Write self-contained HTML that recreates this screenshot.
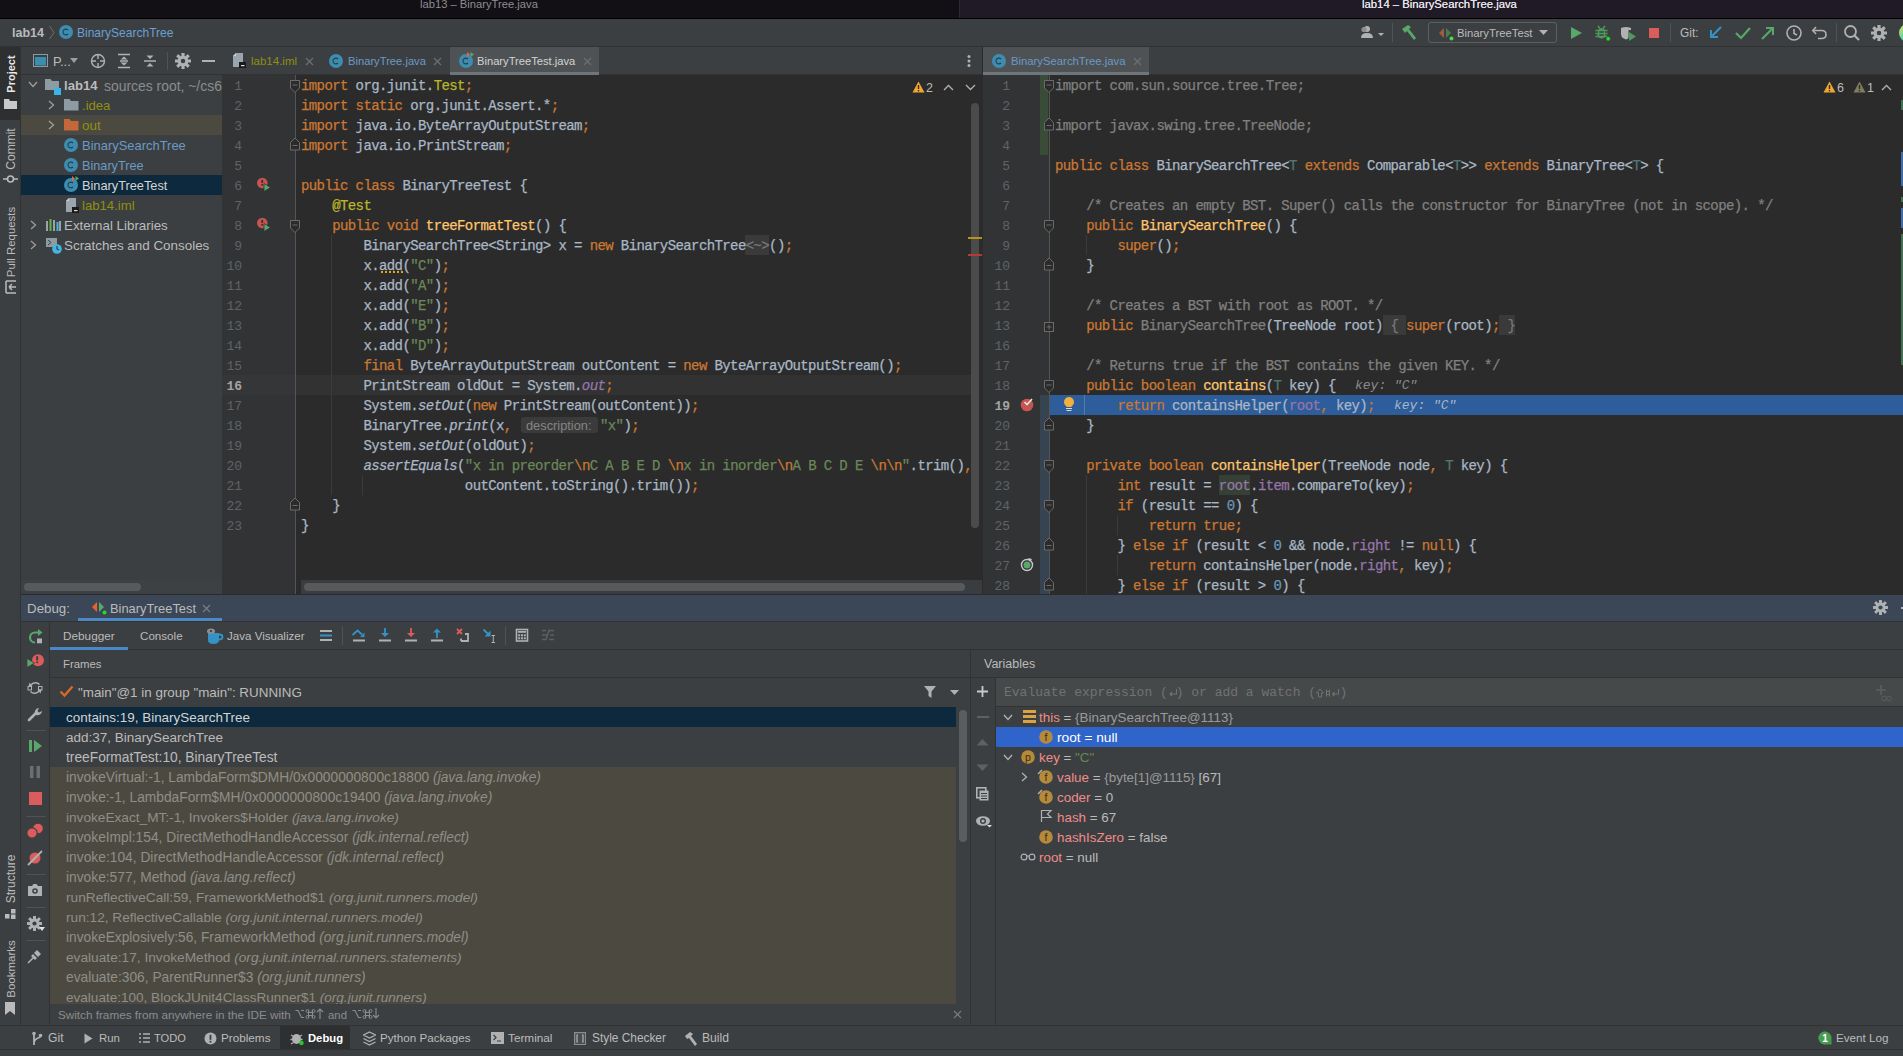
<!DOCTYPE html><html><head><meta charset="utf-8"><style>
*{margin:0;padding:0;box-sizing:border-box}
html,body{width:1903px;height:1056px;overflow:hidden;background:#3C3F41}
body{position:relative;font-family:"Liberation Sans",sans-serif}
body>div{position:absolute}
.t{white-space:pre}
.code{font-family:"Liberation Mono",monospace;font-size:14px;letter-spacing:-0.6px;line-height:20px;height:20px;padding-top:1px;white-space:pre;color:#A9B7C6;-webkit-text-stroke:0.25px currentColor}
.ln{font-family:"Liberation Mono",monospace;font-size:13px;line-height:20px;height:20px;padding-top:2px;width:40px;text-align:right;white-space:pre}
</style></head><body><div style="left:0px;top:0px;width:959px;height:18px;background:#121015;"></div>
<div style="left:959px;top:0px;width:1px;height:18px;background:#2E2936;"></div>
<div style="left:960px;top:0px;width:943px;height:18px;background:#1F1A25;"></div>
<div style="left:0px;top:18px;width:1903px;height:1px;background:#000000;"></div>
<div class="t" style="left:420px;top:-4px;height:16px;line-height:16px;color:#8E8C92;font-size:11.21px;">lab13 – BinaryTree.java</div>
<div class="t" style="left:1362px;top:-4px;height:16px;line-height:16px;color:#E6E4EA;font-size:11.32px;text-shadow:0 0 0.4px #E6E4EA;">lab14 – BinarySearchTree.java</div>
<div style="left:0px;top:19px;width:1903px;height:28px;background:#3C3F41;"></div>
<div style="left:0px;top:46px;width:1903px;height:1px;background:#323232;"></div>
<div class="t" style="left:12px;top:23px;height:20px;line-height:20px;color:#BBBBBB;font-size:12.52px;font-weight:bold;">lab14</div>
<svg style="position:absolute;left:48px;top:25px;" width="8" height="15" viewBox="0 0 8 15"><path d="M1.5 1 L6 7.5 L1.5 14" stroke="#6E6E6E" stroke-width="1" fill="none"/></svg>
<svg style="position:absolute;left:59px;top:25px;" width="14" height="14" viewBox="0 0 14 14"><circle cx="7" cy="7" r="7" fill="#3E8DB0"/><path d="M9 5 A2.9 2.9 0 1 0 9 9" stroke="#22404D" stroke-width="1.1" fill="none"/></svg>
<div class="t" style="left:77px;top:23px;height:20px;line-height:20px;color:#6A9FD0;font-size:12.02px;">BinarySearchTree</div>
<svg style="position:absolute;left:1358px;top:25px;" width="28" height="16" viewBox="0 0 28 16"><circle cx="9" cy="4" r="3" fill="#AFB1B3"/><path d="M3 13 Q3 8 9 8 Q15 8 15 13Z" fill="#AFB1B3"/><circle cx="6" cy="4.5" r="2.6" fill="#8C8E90"/><path d="M20 8 L26 8 L23 11Z" fill="#AFB1B3"/></svg>
<div style="left:1392px;top:23px;width:1px;height:19px;background:#505356;"></div>
<svg style="position:absolute;left:1400px;top:24px;" width="18" height="18" viewBox="0 0 18 18"><path d="M2 5 L8 1 L11 3 L9 5 L16 14 L14 16 L7 7 L5 9Z" fill="#59A869"/></svg>
<div style="left:1428px;top:22px;width:129px;height:21px;background:transparent;border:1px solid #5E6060;border-radius:3px;box-sizing:border-box;"></div>
<svg style="position:absolute;left:1438px;top:26px;" width="18" height="16" viewBox="0 0 18 16"><path d="M6 2 L1 7 L6 12Z" fill="#9B5E3F"/><path d="M8 2 L13 7 L8 12Z" fill="#4C7A55"/><circle cx="13.5" cy="12.5" r="2" fill="#3FE03F"/></svg>
<div class="t" style="left:1457px;top:23px;height:20px;line-height:20px;color:#BBBBBB;font-size:11.29px;">BinaryTreeTest</div>
<svg style="position:absolute;left:1539px;top:29px;" width="10" height="8" viewBox="0 0 10 8"><path d="M0 1 L9 1 L4.5 6Z" fill="#AFB1B3"/></svg>
<svg style="position:absolute;left:1568px;top:25px;" width="16" height="16" viewBox="0 0 16 16"><path d="M3 2 L14 8 L3 14Z" fill="#59A869"/></svg>
<svg style="position:absolute;left:1595px;top:25px;" width="18" height="18" viewBox="0 0 18 18"><path d="M3 1 L5 3.5 M10 1 L8 3.5" stroke="#4E9A5E" stroke-width="1.5"/><path d="M3.5 4.5 Q6.5 1.5 9.5 4.5 L10.5 11 Q6.5 16 2.5 11Z" fill="#4E9A5E"/><path d="M0.5 5.5 L12.5 5.5 M0.5 8.5 L12.5 8.5 M0.5 11.5 L12.5 11.5" stroke="#4E9A5E" stroke-width="1.6"/><rect x="4.3" y="6.3" width="4.4" height="1.4" fill="#3C3F41"/><rect x="4.3" y="9.3" width="4.4" height="1.4" fill="#3C3F41"/><circle cx="13.2" cy="13.8" r="2.2" fill="#22E022" stroke="#3C3F41" stroke-width="0.6"/></svg>
<svg style="position:absolute;left:1620px;top:26px;" width="18" height="17" viewBox="0 0 18 17"><path d="M1 2 Q6 0 11 2 L11 4 L8.5 4 L8.5 11 Q8.5 13 6 13.5 Q1 12 1 8Z" fill="#AFB1B3"/><path d="M9 6 L16 10.5 L9 15Z" fill="#4E9A5E"/></svg>
<div style="left:1649px;top:28px;width:10px;height:10px;background:#DB5C5C;"></div>
<div style="left:1670px;top:23px;width:1px;height:19px;background:#505356;"></div>
<div class="t" style="left:1680px;top:23px;height:20px;line-height:20px;color:#BBBBBB;font-size:11.89px;">Git:</div>
<svg style="position:absolute;left:1707px;top:24px;" width="18" height="18" viewBox="0 0 18 18"><path d="M14 3 L4 13 M4 6 L4 13 L11 13" stroke="#3592C4" stroke-width="2" fill="none"/></svg>
<svg style="position:absolute;left:1734px;top:24px;" width="18" height="18" viewBox="0 0 18 18"><path d="M2 9 L7 14 L16 4" stroke="#59A869" stroke-width="2.2" fill="none"/></svg>
<svg style="position:absolute;left:1759px;top:24px;" width="18" height="18" viewBox="0 0 18 18"><path d="M3 15 L14 4 M7 4 L14 4 L14 11" stroke="#59A869" stroke-width="2" fill="none"/></svg>
<svg style="position:absolute;left:1785px;top:24px;" width="18" height="18" viewBox="0 0 18 18"><circle cx="9" cy="9" r="7" stroke="#AFB1B3" stroke-width="1.6" fill="none"/><path d="M9 5 L9 9.5 L12 11" stroke="#AFB1B3" stroke-width="1.6" fill="none"/></svg>
<svg style="position:absolute;left:1811px;top:24px;" width="18" height="18" viewBox="0 0 18 18"><path d="M5 3 L1.8 6.5 L5 10" stroke="#AFB1B3" stroke-width="1.6" fill="none"/><path d="M2 6.5 L10.5 6.5 Q15 6.5 15 10.5 Q15 14.5 10.5 14.5 L7 14.5" stroke="#AFB1B3" stroke-width="1.6" fill="none"/></svg>
<div style="left:1836px;top:23px;width:1px;height:19px;background:#505356;"></div>
<svg style="position:absolute;left:1843px;top:24px;" width="18" height="18" viewBox="0 0 18 18"><circle cx="7.5" cy="7.5" r="5.5" stroke="#AFB1B3" stroke-width="1.8" fill="none"/><path d="M11.5 11.5 L16 16" stroke="#AFB1B3" stroke-width="2.2"/></svg>
<svg style="position:absolute;left:1871px;top:25px;" width="16" height="16" viewBox="0 0 16 16"><rect x="6.40" y="-0.20" width="3.20" height="4.52" rx="0.6" fill="#AFB1B3" transform="rotate(0 8.0 8.0)"/><rect x="6.40" y="-0.20" width="3.20" height="4.52" rx="0.6" fill="#AFB1B3" transform="rotate(45 8.0 8.0)"/><rect x="6.40" y="-0.20" width="3.20" height="4.52" rx="0.6" fill="#AFB1B3" transform="rotate(90 8.0 8.0)"/><rect x="6.40" y="-0.20" width="3.20" height="4.52" rx="0.6" fill="#AFB1B3" transform="rotate(135 8.0 8.0)"/><rect x="6.40" y="-0.20" width="3.20" height="4.52" rx="0.6" fill="#AFB1B3" transform="rotate(180 8.0 8.0)"/><rect x="6.40" y="-0.20" width="3.20" height="4.52" rx="0.6" fill="#AFB1B3" transform="rotate(225 8.0 8.0)"/><rect x="6.40" y="-0.20" width="3.20" height="4.52" rx="0.6" fill="#AFB1B3" transform="rotate(270 8.0 8.0)"/><rect x="6.40" y="-0.20" width="3.20" height="4.52" rx="0.6" fill="#AFB1B3" transform="rotate(315 8.0 8.0)"/><circle cx="8.0" cy="8.0" r="5.28" fill="#AFB1B3"/><circle cx="8.0" cy="8.0" r="2.24" fill="#3C3F41"/></svg>
<svg style="position:absolute;left:1898px;top:24px;" width="10" height="18" viewBox="0 0 10 18"><defs><linearGradient id="cg" x1="0" y1="0" x2="1" y2="1"><stop offset="0" stop-color="#F5E05A"/><stop offset="0.5" stop-color="#5AD2A0"/><stop offset="1" stop-color="#3E8EF7"/></linearGradient></defs><ellipse cx="9" cy="9" rx="8" ry="8.5" fill="url(#cg)"/></svg>
<div style="left:0px;top:47px;width:20px;height:979px;background:#3C3F41;"></div>
<div style="left:20px;top:47px;width:1px;height:979px;background:#323232;"></div>
<div style="left:0px;top:47px;width:20px;height:73px;background:#2D2F30;"></div>
<div class="t" style="left:-49.5px;top:64.0px;width:120px;height:20px;line-height:20px;text-align:center;color:#E8E8E8;font-size:11px;transform:rotate(-90deg);font-weight:bold;">Project</div>
<svg style="position:absolute;left:4px;top:99px;" width="13" height="10" viewBox="0 0 13 10"><path d="M0 0 L5 0 L6 2 L13 2 L13 10 L0 10Z" fill="#C9C9C9"/></svg>
<div class="t" style="left:-49.5px;top:139.0px;width:120px;height:20px;line-height:20px;text-align:center;color:#BBBBBB;font-size:12px;transform:rotate(-90deg);">Commit</div>
<svg style="position:absolute;left:3px;top:173px;" width="15" height="12" viewBox="0 0 15 12"><circle cx="7.5" cy="6" r="3" stroke="#BBBBBB" stroke-width="1.6" fill="none"/><path d="M0 6 L4 6 M11 6 L15 6" stroke="#BBBBBB" stroke-width="1.6"/></svg>
<div class="t" style="left:-49.5px;top:231.5px;width:120px;height:20px;line-height:20px;text-align:center;color:#BBBBBB;font-size:11.4px;transform:rotate(-90deg);">Pull Requests</div>
<svg style="position:absolute;left:5px;top:280px;" width="12" height="14" viewBox="0 0 12 14"><path d="M1 1 L1 13 M1 1 L11 1 M1 13 L11 13 M4 7 L11 7 M4 7 L7 4 M4 7 L7 10" stroke="#BBBBBB" stroke-width="1.5" fill="none"/></svg>
<div class="t" style="left:-49.5px;top:869.0px;width:120px;height:20px;line-height:20px;text-align:center;color:#BBBBBB;font-size:12px;transform:rotate(-90deg);">Structure</div>
<svg style="position:absolute;left:5px;top:909px;" width="11" height="10" viewBox="0 0 11 10"><rect x="0" y="5" width="4.5" height="4.5" fill="#BBBBBB"/><rect x="6" y="0" width="4.5" height="4.5" fill="#BBBBBB"/><rect x="6" y="5.5" width="4.5" height="4.5" fill="#BBBBBB"/></svg>
<div class="t" style="left:-49.5px;top:959.0px;width:120px;height:20px;line-height:20px;text-align:center;color:#BBBBBB;font-size:11.5px;transform:rotate(-90deg);">Bookmarks</div>
<svg style="position:absolute;left:5px;top:1002px;" width="10" height="13" viewBox="0 0 10 13"><path d="M0 0 L10 0 L10 13 L5 9 L0 13Z" fill="#BBBBBB"/></svg>
<div style="left:21px;top:47px;width:201px;height:548px;background:#3C3F41;"></div>
<div style="left:21px;top:74px;width:201px;height:1px;background:#323232;"></div>
<svg style="position:absolute;left:33px;top:54px;" width="16" height="14" viewBox="0 0 16 14"><rect x="0.5" y="0.5" width="14" height="12" fill="none" stroke="#8C9AA3"/><rect x="2" y="3" width="11" height="8.5" fill="#3B8EB0"/></svg>
<div class="t" style="left:53px;top:52px;height:20px;line-height:20px;color:#BBBBBB;font-size:13px;">P...</div>
<svg style="position:absolute;left:70px;top:58px;" width="9" height="6" viewBox="0 0 9 6"><path d="M0 0 L8 0 L4 5Z" fill="#9E9E9E"/></svg>
<svg style="position:absolute;left:90px;top:53px;" width="16" height="16" viewBox="0 0 16 16"><circle cx="8" cy="8" r="6.5" stroke="#AFB1B3" stroke-width="1.4" fill="none"/><path d="M8 1 L8 6 M8 10 L8 15 M1 8 L6 8 M10 8 L15 8" stroke="#AFB1B3" stroke-width="1.4"/></svg>
<svg style="position:absolute;left:117px;top:53px;" width="14" height="16" viewBox="0 0 14 16"><path d="M1 1.5 L13 1.5 M1 14.5 L13 14.5 M3 8 L11 8" stroke="#AFB1B3" stroke-width="1.5"/><path d="M3.5 6.5 L7 3.5 L10.5 6.5Z M3.5 9.5 L7 12.5 L10.5 9.5Z" fill="#AFB1B3"/></svg>
<svg style="position:absolute;left:143px;top:53px;" width="14" height="16" viewBox="0 0 14 16"><path d="M1 8 L13 8" stroke="#AFB1B3" stroke-width="1.5"/><path d="M3.5 2.5 L10.5 2.5 L7 6Z M3.5 13.5 L10.5 13.5 L7 10Z" fill="#AFB1B3"/></svg>
<div style="left:167px;top:52px;width:1px;height:18px;background:#505356;"></div>
<svg style="position:absolute;left:175px;top:53px;" width="16" height="16" viewBox="0 0 16 16"><rect x="6.40" y="-0.20" width="3.20" height="4.52" rx="0.6" fill="#AFB1B3" transform="rotate(0 8.0 8.0)"/><rect x="6.40" y="-0.20" width="3.20" height="4.52" rx="0.6" fill="#AFB1B3" transform="rotate(45 8.0 8.0)"/><rect x="6.40" y="-0.20" width="3.20" height="4.52" rx="0.6" fill="#AFB1B3" transform="rotate(90 8.0 8.0)"/><rect x="6.40" y="-0.20" width="3.20" height="4.52" rx="0.6" fill="#AFB1B3" transform="rotate(135 8.0 8.0)"/><rect x="6.40" y="-0.20" width="3.20" height="4.52" rx="0.6" fill="#AFB1B3" transform="rotate(180 8.0 8.0)"/><rect x="6.40" y="-0.20" width="3.20" height="4.52" rx="0.6" fill="#AFB1B3" transform="rotate(225 8.0 8.0)"/><rect x="6.40" y="-0.20" width="3.20" height="4.52" rx="0.6" fill="#AFB1B3" transform="rotate(270 8.0 8.0)"/><rect x="6.40" y="-0.20" width="3.20" height="4.52" rx="0.6" fill="#AFB1B3" transform="rotate(315 8.0 8.0)"/><circle cx="8.0" cy="8.0" r="5.28" fill="#AFB1B3"/><circle cx="8.0" cy="8.0" r="2.24" fill="#3C3F41"/></svg>
<div style="left:202px;top:60px;width:13px;height:2px;background:#AFB1B3;"></div>
<div style="left:21px;top:115px;width:201px;height:20px;background:#4C4A40;"></div>
<div style="left:21px;top:175px;width:201px;height:20px;background:#0D293E;"></div>
<svg style="position:absolute;left:28px;top:81px;" width="10" height="7" viewBox="0 0 10 7"><path d="M1 1 L5 5.5 L9 1" stroke="#9E9E9E" stroke-width="1.3" fill="none"/></svg>
<svg style="position:absolute;left:45px;top:79px;" width="17" height="16" viewBox="0 0 17 16"><path d="M0 0 L5.5 0 L7 2 L14 2 L14 11 L0 11Z" fill="#8D9BA3"/><rect x="9" y="9" width="7" height="7" fill="#3BB4E8"/></svg>
<div class="t" style="left:64px;top:76px;height:20px;line-height:20px;color:#BBBBBB;font-size:13.1px;font-weight:bold;">lab14</div>
<div class="t" style="left:104px;top:76px;height:20px;line-height:20px;color:#8C8C8C;font-size:13.92px;">sources root, ~/cs6</div>
<svg style="position:absolute;left:48px;top:100px;" width="7" height="10" viewBox="0 0 7 10"><path d="M1 1 L5.5 5 L1 9" stroke="#9E9E9E" stroke-width="1.3" fill="none"/></svg>
<svg style="position:absolute;left:64px;top:99px;" width="15" height="12" viewBox="0 0 15 12"><path d="M0 0 L5.5 0 L7 2 L14.5 2 L14.5 11.5 L0 11.5Z" fill="#8D9BA3"/></svg>
<div class="t" style="left:82px;top:96px;height:20px;line-height:20px;color:#8F9010;font-size:13.1px;">.idea</div>
<svg style="position:absolute;left:48px;top:120px;" width="7" height="10" viewBox="0 0 7 10"><path d="M1 1 L5.5 5 L1 9" stroke="#9E9E9E" stroke-width="1.3" fill="none"/></svg>
<svg style="position:absolute;left:64px;top:119px;" width="15" height="12" viewBox="0 0 15 12"><path d="M0 0 L5.5 0 L7 2 L14.5 2 L14.5 11.5 L0 11.5Z" fill="#C4683A"/></svg>
<div class="t" style="left:82px;top:116px;height:20px;line-height:20px;color:#8F9010;font-size:13.45px;">out</div>
<svg style="position:absolute;left:64px;top:138px;" width="14" height="14" viewBox="0 0 14 14"><circle cx="7" cy="7" r="7" fill="#3E8DB0"/><path d="M9 5 A2.9 2.9 0 1 0 9 9" stroke="#22404D" stroke-width="1.1" fill="none"/></svg>
<div class="t" style="left:82px;top:136px;height:20px;line-height:20px;color:#6A9AC6;font-size:12.94px;">BinarySearchTree</div>
<svg style="position:absolute;left:64px;top:158px;" width="14" height="14" viewBox="0 0 14 14"><circle cx="7" cy="7" r="7" fill="#3E8DB0"/><path d="M9 5 A2.9 2.9 0 1 0 9 9" stroke="#22404D" stroke-width="1.1" fill="none"/></svg>
<div class="t" style="left:82px;top:156px;height:20px;line-height:20px;color:#6A9AC6;font-size:12.69px;">BinaryTree</div>
<svg style="position:absolute;left:64px;top:178px;" width="14" height="14" viewBox="0 0 14 14"><circle cx="7" cy="7" r="7" fill="#3E8DB0"/><path d="M9 5 A2.9 2.9 0 1 0 9 9" stroke="#22404D" stroke-width="1.1" fill="none"/></svg>
<svg style="position:absolute;left:71px;top:175px;" width="9" height="8" viewBox="0 0 9 8"><path d="M1 1 L4 3.5 L1 6Z" fill="#E06A3C"/><path d="M4.5 1 L8 3.5 L4.5 6Z" fill="#59A869"/></svg>
<div class="t" style="left:82px;top:176px;height:20px;line-height:20px;color:#D4D4D4;font-size:12.77px;">BinaryTreeTest</div>
<svg style="position:absolute;left:66px;top:198px;" width="13" height="15" viewBox="0 0 13 15"><path d="M3 0 L10 0 L10 14 L0 14 L0 3Z" fill="#9AA5AD"/><path d="M0 3 L3 3 L3 0Z" fill="#C9D0D5"/><rect x="6" y="9" width="7" height="6" fill="#1A1A1A"/><rect x="8" y="12" width="3.5" height="1.2" fill="#DDD"/></svg>
<div class="t" style="left:82px;top:196px;height:20px;line-height:20px;color:#8F9010;font-size:13.17px;">lab14.iml</div>
<svg style="position:absolute;left:30px;top:220px;" width="7" height="10" viewBox="0 0 7 10"><path d="M1 1 L5.5 5 L1 9" stroke="#9E9E9E" stroke-width="1.3" fill="none"/></svg>
<svg style="position:absolute;left:46px;top:219px;" width="15" height="12" viewBox="0 0 15 12"><rect x="0" y="2" width="2" height="10" fill="#9AA3A8"/><rect x="3.5" y="0" width="2" height="12" fill="#62B543"/><rect x="7" y="1" width="2" height="11" fill="#9AA3A8"/><rect x="10.5" y="3" width="2" height="9" fill="#40B6E0"/><rect x="13" y="2" width="2" height="10" fill="#9AA3A8"/></svg>
<div class="t" style="left:64px;top:216px;height:20px;line-height:20px;color:#BBBBBB;font-size:13.34px;">External Libraries</div>
<svg style="position:absolute;left:30px;top:240px;" width="7" height="10" viewBox="0 0 7 10"><path d="M1 1 L5.5 5 L1 9" stroke="#9E9E9E" stroke-width="1.3" fill="none"/></svg>
<svg style="position:absolute;left:46px;top:238px;" width="16" height="16" viewBox="0 0 16 16"><path d="M0 0 L11 0 L11 9 L0 9Z" fill="#8D9BA3"/><path d="M2 2 L5 4.5 L2 7" stroke="#3C3F41" stroke-width="1" fill="none"/><circle cx="11" cy="11" r="4.8" fill="#40B6E0"/><path d="M11 8 L11 11 L13 12" stroke="#3C3F41" stroke-width="1.2" fill="none"/></svg>
<div class="t" style="left:64px;top:236px;height:20px;line-height:20px;color:#BBBBBB;font-size:13.41px;">Scratches and Consoles</div>
<div style="left:21px;top:580px;width:201px;height:14px;background:#3E4143;"></div>
<div style="left:24px;top:583px;width:117px;height:8px;background:#58595B;border-radius:4px;"></div>
<div style="left:222px;top:47px;width:760px;height:28px;background:#3C3F41;"></div>
<div style="left:222px;top:74px;width:760px;height:1px;background:#323232;"></div>
<div style="left:982px;top:47px;width:1px;height:548px;background:#2B2B2B;"></div>
<svg style="position:absolute;left:233px;top:53px;" width="13" height="15" viewBox="0 0 13 15"><path d="M3 0 L10 0 L10 14 L0 14 L0 3Z" fill="#9AA5AD"/><path d="M0 3 L3 3 L3 0Z" fill="#C9D0D5"/><rect x="6" y="9" width="7" height="6" fill="#1A1A1A"/><rect x="8" y="12" width="3.5" height="1.2" fill="#DDD"/></svg>
<div class="t" style="left:251px;top:51px;height:20px;line-height:20px;color:#8F9010;font-size:11.5px;">lab14.iml</div>
<svg style="position:absolute;left:305px;top:57px;" width="9" height="9" viewBox="0 0 9 9"><path d="M1 1 L8 8 M8 1 L1 8" stroke="#6E7073" stroke-width="1.1"/></svg>
<svg style="position:absolute;left:329px;top:54px;" width="14" height="14" viewBox="0 0 14 14"><circle cx="7" cy="7" r="7" fill="#3E8DB0"/><path d="M9 5 A2.9 2.9 0 1 0 9 9" stroke="#22404D" stroke-width="1.1" fill="none"/></svg>
<div class="t" style="left:348px;top:51px;height:20px;line-height:20px;color:#6A9AC6;font-size:11.2px;">BinaryTree.java</div>
<svg style="position:absolute;left:433px;top:57px;" width="9" height="9" viewBox="0 0 9 9"><path d="M1 1 L8 8 M8 1 L1 8" stroke="#6E7073" stroke-width="1.1"/></svg>
<div style="left:450px;top:47px;width:149px;height:25px;background:#4E5254;"></div>
<div style="left:450px;top:72px;width:149px;height:3px;background:#6E757B;"></div>
<svg style="position:absolute;left:459px;top:54px;" width="14" height="14" viewBox="0 0 14 14"><circle cx="7" cy="7" r="7" fill="#3E8DB0"/><path d="M9 5 A2.9 2.9 0 1 0 9 9" stroke="#22404D" stroke-width="1.1" fill="none"/></svg>
<svg style="position:absolute;left:466px;top:51px;" width="9" height="8" viewBox="0 0 9 8"><path d="M1 1 L4 3.5 L1 6Z" fill="#E06A3C"/><path d="M4.5 1 L8 3.5 L4.5 6Z" fill="#59A869"/></svg>
<div class="t" style="left:477px;top:51px;height:20px;line-height:20px;color:#D4D4D4;font-size:11.18px;">BinaryTreeTest.java</div>
<svg style="position:absolute;left:583px;top:57px;" width="9" height="9" viewBox="0 0 9 9"><path d="M1 1 L8 8 M8 1 L1 8" stroke="#6E7073" stroke-width="1.1"/></svg>
<svg style="position:absolute;left:966px;top:54px;" width="6" height="14" viewBox="0 0 6 14"><circle cx="3" cy="2.5" r="1.5" fill="#AFB1B3"/><circle cx="3" cy="7" r="1.5" fill="#AFB1B3"/><circle cx="3" cy="11.5" r="1.5" fill="#AFB1B3"/></svg>
<div style="left:222px;top:75px;width:760px;height:520px;background:#2B2B2B;"></div>
<div style="left:222px;top:75px;width:73px;height:520px;background:#313335;"></div>
<div style="left:295px;top:75px;width:1px;height:519px;background:#555555;"></div>
<div style="left:745px;top:235px;width:24px;height:20px;background:#3A3A3A;"></div>
<div style="left:296px;top:375px;width:675px;height:20px;background:#323232;"></div>
<div style="left:222px;top:375px;width:73px;height:20px;background:#343638;"></div>
<div style="left:331px;top:235px;width:1px;height:260px;background:#3B3B3B;"></div>
<div style="left:362px;top:475px;width:1px;height:20px;background:#3B3B3B;"></div>
<div class="ln" style="left:202px;top:75px;color:#606366;">1</div>
<div class="code" style="left:301px;top:75px;"><span style="color:#CC7832;">import</span><span> org.junit.</span><span style="color:#BBB529;">Test</span><span style="color:#CC7832;">;</span></div>
<div class="ln" style="left:202px;top:95px;color:#606366;">2</div>
<div class="code" style="left:301px;top:95px;"><span style="color:#CC7832;">import static</span><span> org.junit.Assert.*</span><span style="color:#CC7832;">;</span></div>
<div class="ln" style="left:202px;top:115px;color:#606366;">3</div>
<div class="code" style="left:301px;top:115px;"><span style="color:#CC7832;">import</span><span> java.io.ByteArrayOutputStream</span><span style="color:#CC7832;">;</span></div>
<div class="ln" style="left:202px;top:135px;color:#606366;">4</div>
<div class="code" style="left:301px;top:135px;"><span style="color:#CC7832;">import</span><span> java.io.PrintStream</span><span style="color:#CC7832;">;</span></div>
<div class="ln" style="left:202px;top:155px;color:#606366;">5</div>
<div class="ln" style="left:202px;top:175px;color:#606366;">6</div>
<div class="code" style="left:301px;top:175px;"><span style="color:#CC7832;">public class</span><span> BinaryTreeTest {</span></div>
<div class="ln" style="left:202px;top:195px;color:#606366;">7</div>
<div class="code" style="left:301px;top:195px;"><span>    </span><span style="color:#BBB529;">@Test</span></div>
<div class="ln" style="left:202px;top:215px;color:#606366;">8</div>
<div class="code" style="left:301px;top:215px;"><span>    </span><span style="color:#CC7832;">public void</span><span> </span><span style="color:#FFC66D;">treeFormatTest</span><span>() {</span></div>
<div class="ln" style="left:202px;top:235px;color:#606366;">9</div>
<div class="code" style="left:301px;top:235px;"><span>        BinarySearchTree&lt;String&gt; x = </span><span style="color:#CC7832;">new</span><span> BinarySearchTree</span><span style="color:#787878;">&lt;~&gt;</span><span>()</span><span style="color:#CC7832;">;</span></div>
<div class="ln" style="left:202px;top:255px;color:#606366;">10</div>
<div class="code" style="left:301px;top:255px;"><span>        x.add(</span><span style="color:#6A8759;">&quot;C&quot;</span><span>)</span><span style="color:#CC7832;">;</span></div>
<div class="ln" style="left:202px;top:275px;color:#606366;">11</div>
<div class="code" style="left:301px;top:275px;"><span>        x.add(</span><span style="color:#6A8759;">&quot;A&quot;</span><span>)</span><span style="color:#CC7832;">;</span></div>
<div class="ln" style="left:202px;top:295px;color:#606366;">12</div>
<div class="code" style="left:301px;top:295px;"><span>        x.add(</span><span style="color:#6A8759;">&quot;E&quot;</span><span>)</span><span style="color:#CC7832;">;</span></div>
<div class="ln" style="left:202px;top:315px;color:#606366;">13</div>
<div class="code" style="left:301px;top:315px;"><span>        x.add(</span><span style="color:#6A8759;">&quot;B&quot;</span><span>)</span><span style="color:#CC7832;">;</span></div>
<div class="ln" style="left:202px;top:335px;color:#606366;">14</div>
<div class="code" style="left:301px;top:335px;"><span>        x.add(</span><span style="color:#6A8759;">&quot;D&quot;</span><span>)</span><span style="color:#CC7832;">;</span></div>
<div class="ln" style="left:202px;top:355px;color:#606366;">15</div>
<div class="code" style="left:301px;top:355px;"><span>        </span><span style="color:#CC7832;">final</span><span> ByteArrayOutputStream outContent = </span><span style="color:#CC7832;">new</span><span> ByteArrayOutputStream()</span><span style="color:#CC7832;">;</span></div>
<div class="ln" style="left:202px;top:375px;color:#A4A3A3;font-weight:bold;">16</div>
<div class="code" style="left:301px;top:375px;"><span>        PrintStream oldOut = System.</span><span style="color:#9876AA;font-style:italic;">out</span><span style="color:#CC7832;">;</span></div>
<div class="ln" style="left:202px;top:395px;color:#606366;">17</div>
<div class="code" style="left:301px;top:395px;"><span>        System.</span><span style="color:#A9B7C6;font-style:italic;">setOut</span><span>(</span><span style="color:#CC7832;">new</span><span> PrintStream(outContent))</span><span style="color:#CC7832;">;</span></div>
<div class="ln" style="left:202px;top:415px;color:#606366;">18</div>
<div class="code" style="left:301px;top:415px;"><span>        BinaryTree.</span><span style="color:#A9B7C6;font-style:italic;">print</span><span>(x</span><span style="color:#CC7832;">,</span></div>
<div class="ln" style="left:202px;top:435px;color:#606366;">19</div>
<div class="code" style="left:301px;top:435px;"><span>        System.</span><span style="color:#A9B7C6;font-style:italic;">setOut</span><span>(oldOut)</span><span style="color:#CC7832;">;</span></div>
<div class="ln" style="left:202px;top:455px;color:#606366;">20</div>
<div class="code" style="left:301px;top:455px;"><span>        </span><span style="color:#A9B7C6;font-style:italic;">assertEquals</span><span>(</span><span style="color:#6A8759;">&quot;x in preorder</span><span style="color:#CC7832;">\n</span><span style="color:#6A8759;">C A B E D </span><span style="color:#CC7832;">\n</span><span style="color:#6A8759;">x in inorder</span><span style="color:#CC7832;">\n</span><span style="color:#6A8759;">A B C D E </span><span style="color:#CC7832;">\n\n</span><span style="color:#6A8759;">&quot;</span><span>.trim()</span><span style="color:#CC7832;">,</span></div>
<div class="ln" style="left:202px;top:475px;color:#606366;">21</div>
<div class="code" style="left:301px;top:475px;"><span>                     outContent.toString().trim())</span><span style="color:#CC7832;">;</span></div>
<div class="ln" style="left:202px;top:495px;color:#606366;">22</div>
<div class="code" style="left:301px;top:495px;"><span>    }</span></div>
<div class="ln" style="left:202px;top:515px;color:#606366;">23</div>
<div class="code" style="left:301px;top:515px;"><span>}</span></div>
<div style="left:521px;top:417px;width:77px;height:16px;background:#3B3B3B;border-radius:3px;"></div>
<div class="t" style="left:526px;top:416px;height:20px;line-height:20px;color:#858585;font-size:12.81px;">description:</div>
<div class="code" style="left:600px;top:415px;"><span style="color:#6A8759;">&quot;x&quot;</span><span>)</span><span style="color:#CC7832;">;</span></div>
<svg style="position:absolute;left:381px;top:271px;" width="24" height="2" viewBox="0 0 24 2"><rect x="0" y="0" width="2" height="2" fill="#E8A317"/><rect x="4" y="0" width="2" height="2" fill="#E8A317"/><rect x="8" y="0" width="2" height="2" fill="#E8A317"/><rect x="12" y="0" width="2" height="2" fill="#E8A317"/><rect x="16" y="0" width="2" height="2" fill="#E8A317"/><rect x="20" y="0" width="2" height="2" fill="#E8A317"/></svg>
<svg style="position:absolute;left:290px;top:80px;" width="11" height="14" viewBox="0 0 11 14"><path d="M0.5 0.5 L9.5 0.5 L9.5 8 L5 12.5 L0.5 8Z" fill="#2B2B2B" stroke="#6B6B6B" stroke-width="1"/><path d="M2.5 5 L7.5 5" stroke="#6B6B6B" stroke-width="1"/></svg>
<svg style="position:absolute;left:290px;top:137px;" width="11" height="14" viewBox="0 0 11 14"><path d="M0.5 13 L9.5 13 L9.5 5.5 L5 1 L0.5 5.5Z" fill="#2B2B2B" stroke="#6B6B6B" stroke-width="1"/><path d="M2.5 8.5 L7.5 8.5" stroke="#6B6B6B" stroke-width="1"/></svg>
<svg style="position:absolute;left:290px;top:220px;" width="11" height="14" viewBox="0 0 11 14"><path d="M0.5 0.5 L9.5 0.5 L9.5 8 L5 12.5 L0.5 8Z" fill="#2B2B2B" stroke="#6B6B6B" stroke-width="1"/><path d="M2.5 5 L7.5 5" stroke="#6B6B6B" stroke-width="1"/></svg>
<svg style="position:absolute;left:290px;top:497px;" width="11" height="14" viewBox="0 0 11 14"><path d="M0.5 13 L9.5 13 L9.5 5.5 L5 1 L0.5 5.5Z" fill="#2B2B2B" stroke="#6B6B6B" stroke-width="1"/><path d="M2.5 8.5 L7.5 8.5" stroke="#6B6B6B" stroke-width="1"/></svg>
<svg style="position:absolute;left:256px;top:177px;" width="18" height="18" viewBox="0 0 18 18"><circle cx="6.3" cy="6" r="5.3" fill="#C75450"/><rect x="5.3" y="2.8" width="1.8" height="3.2" fill="#313335"/><rect x="5.3" y="7" width="1.8" height="1.6" fill="#313335"/><path d="M8 6.5 L14.5 10.5 L8 14.5Z" fill="#59A869" stroke="#313335" stroke-width="0.8"/></svg>
<svg style="position:absolute;left:256px;top:217px;" width="18" height="18" viewBox="0 0 18 18"><circle cx="6.3" cy="6" r="5.3" fill="#C75450"/><rect x="5.3" y="2.8" width="1.8" height="3.2" fill="#313335"/><rect x="5.3" y="7" width="1.8" height="1.6" fill="#313335"/><path d="M8 6.5 L14.5 10.5 L8 14.5Z" fill="#59A869" stroke="#313335" stroke-width="0.8"/></svg>
<svg style="position:absolute;left:912px;top:81px;" width="13" height="12" viewBox="0 0 13 12"><path d="M6.5 0.5 L12.5 11.5 L0.5 11.5Z" fill="#F0A732"/><rect x="5.8" y="4" width="1.4" height="4" fill="#2B2B2B"/><rect x="5.8" y="9" width="1.4" height="1.4" fill="#2B2B2B"/></svg>
<div class="t" style="left:926px;top:78px;height:20px;line-height:20px;color:#BBBBBB;font-size:12.5px;">2</div>
<svg style="position:absolute;left:943px;top:84px;" width="11" height="7" viewBox="0 0 11 7"><path d="M1 6 L5.5 1.5 L10 6" stroke="#AFB1B3" stroke-width="1.3" fill="none"/></svg>
<svg style="position:absolute;left:965px;top:84px;" width="11" height="7" viewBox="0 0 11 7"><path d="M1 1 L5.5 5.5 L10 1" stroke="#AFB1B3" stroke-width="1.3" fill="none"/></svg>
<div style="left:971px;top:103px;width:8px;height:425px;background:#4B4B4B;border-radius:4px;"></div>
<div style="left:968px;top:237px;width:14px;height:2px;background:#BE9117;"></div>
<div style="left:968px;top:254px;width:14px;height:2px;background:#B53A36;"></div>
<div style="left:301px;top:580px;width:681px;height:14px;background:#3A3D3F;"></div>
<div style="left:304px;top:583px;width:661px;height:8px;background:#58595B;border-radius:4px;"></div>
<div style="left:983px;top:47px;width:920px;height:28px;background:#3C3F41;"></div>
<div style="left:983px;top:74px;width:920px;height:1px;background:#323232;"></div>
<div style="left:983px;top:47px;width:166px;height:25px;background:#4E5254;"></div>
<div style="left:983px;top:72px;width:166px;height:3px;background:#6E757B;"></div>
<svg style="position:absolute;left:992px;top:54px;" width="14" height="14" viewBox="0 0 14 14"><circle cx="7" cy="7" r="7" fill="#3E8DB0"/><path d="M9 5 A2.9 2.9 0 1 0 9 9" stroke="#22404D" stroke-width="1.1" fill="none"/></svg>
<div class="t" style="left:1011px;top:51px;height:20px;line-height:20px;color:#6A9AC6;font-size:11.3px;">BinarySearchTree.java</div>
<svg style="position:absolute;left:1133px;top:57px;" width="9" height="9" viewBox="0 0 9 9"><path d="M1 1 L8 8 M8 1 L1 8" stroke="#6E7073" stroke-width="1.1"/></svg>
<div style="left:983px;top:75px;width:920px;height:520px;background:#2B2B2B;"></div>
<div style="left:983px;top:75px;width:66px;height:520px;background:#313335;"></div>
<div style="left:1040px;top:75px;width:8px;height:80px;background:#384C38;"></div>
<div style="left:1040px;top:395px;width:9px;height:200px;background:#354450;"></div>
<div style="left:1049px;top:75px;width:1px;height:520px;background:#555555;"></div>
<div style="left:1050px;top:395px;width:853px;height:20px;background:#2D5D9A;"></div>
<div style="left:1084px;top:395px;width:1px;height:20px;background:#5479AC;"></div>
<div style="left:1086px;top:235px;width:1px;height:20px;background:#3B3B3B;"></div>
<div style="left:1086px;top:475px;width:1px;height:120px;background:#3B3B3B;"></div>
<div style="left:1117px;top:515px;width:1px;height:20px;background:#3B3B3B;"></div>
<div style="left:1117px;top:555px;width:1px;height:20px;background:#3B3B3B;"></div>
<div style="left:1383px;top:315px;width:23px;height:20px;background:#3A3A3A;"></div>
<div style="left:1499px;top:315px;width:16px;height:20px;background:#3A3A3A;"></div>
<div style="left:1219px;top:475px;width:31px;height:20px;background:#344134;"></div>
<div class="ln" style="left:970px;top:75px;color:#606366;">1</div>
<div class="code" style="left:1055px;top:75px;"><span style="color:#808080;">import com.sun.source.tree.Tree;</span></div>
<div class="ln" style="left:970px;top:95px;color:#606366;">2</div>
<div class="ln" style="left:970px;top:115px;color:#606366;">3</div>
<div class="code" style="left:1055px;top:115px;"><span style="color:#808080;">import javax.swing.tree.TreeNode;</span></div>
<div class="ln" style="left:970px;top:135px;color:#606366;">4</div>
<div class="ln" style="left:970px;top:155px;color:#606366;">5</div>
<div class="code" style="left:1055px;top:155px;"><span style="color:#CC7832;">public class</span><span> BinarySearchTree&lt;</span><span style="color:#507874;">T</span><span> </span><span style="color:#CC7832;">extends</span><span> Comparable&lt;</span><span style="color:#507874;">T</span><span>&gt;&gt; </span><span style="color:#CC7832;">extends</span><span> BinaryTree&lt;</span><span style="color:#507874;">T</span><span>&gt; {</span></div>
<div class="ln" style="left:970px;top:175px;color:#606366;">6</div>
<div class="ln" style="left:970px;top:195px;color:#606366;">7</div>
<div class="code" style="left:1055px;top:195px;"><span>    </span><span style="color:#808080;">/* Creates an empty BST. Super() calls the constructor for BinaryTree (not in scope). */</span></div>
<div class="ln" style="left:970px;top:215px;color:#606366;">8</div>
<div class="code" style="left:1055px;top:215px;"><span>    </span><span style="color:#CC7832;">public</span><span> </span><span style="color:#FFC66D;">BinarySearchTree</span><span>() {</span></div>
<div class="ln" style="left:970px;top:235px;color:#606366;">9</div>
<div class="code" style="left:1055px;top:235px;"><span>        </span><span style="color:#CC7832;">super</span><span>()</span><span style="color:#CC7832;">;</span></div>
<div class="ln" style="left:970px;top:255px;color:#606366;">10</div>
<div class="code" style="left:1055px;top:255px;"><span>    }</span></div>
<div class="ln" style="left:970px;top:275px;color:#606366;">11</div>
<div class="ln" style="left:970px;top:295px;color:#606366;">12</div>
<div class="code" style="left:1055px;top:295px;"><span>    </span><span style="color:#808080;">/* Creates a BST with root as ROOT. */</span></div>
<div class="ln" style="left:970px;top:315px;color:#606366;">13</div>
<div class="code" style="left:1055px;top:315px;"><span>    </span><span style="color:#CC7832;">public</span><span> </span><span style="color:#808080;">BinarySearchTree</span><span>(TreeNode root)</span><span style="color:#787878;"> { </span><span style="color:#CC7832;">super</span><span>(root)</span><span style="color:#CC7832;">;</span><span style="color:#787878;"> }</span></div>
<div class="ln" style="left:970px;top:335px;color:#606366;">16</div>
<div class="ln" style="left:970px;top:355px;color:#606366;">17</div>
<div class="code" style="left:1055px;top:355px;"><span>    </span><span style="color:#808080;">/* Returns true if the BST contains the given KEY. */</span></div>
<div class="ln" style="left:970px;top:375px;color:#606366;">18</div>
<div class="code" style="left:1055px;top:375px;"><span>    </span><span style="color:#CC7832;">public boolean</span><span> </span><span style="color:#FFC66D;">contains</span><span>(</span><span style="color:#507874;">T</span><span> key) {</span></div>
<div class="ln" style="left:970px;top:395px;color:#A4A3A3;font-weight:bold;">19</div>
<div class="code" style="left:1055px;top:395px;"><span>        </span><span style="color:#CC7832;">return</span><span> containsHelper(</span><span style="color:#9876AA;">root</span><span style="color:#CC7832;">,</span><span> key)</span><span style="color:#CC7832;">;</span></div>
<div class="ln" style="left:970px;top:415px;color:#606366;">20</div>
<div class="code" style="left:1055px;top:415px;"><span>    }</span></div>
<div class="ln" style="left:970px;top:435px;color:#606366;">21</div>
<div class="ln" style="left:970px;top:455px;color:#606366;">22</div>
<div class="code" style="left:1055px;top:455px;"><span>    </span><span style="color:#CC7832;">private boolean</span><span> </span><span style="color:#FFC66D;">containsHelper</span><span>(TreeNode node</span><span style="color:#CC7832;">,</span><span> </span><span style="color:#507874;">T</span><span> key) {</span></div>
<div class="ln" style="left:970px;top:475px;color:#606366;">23</div>
<div class="code" style="left:1055px;top:475px;"><span>        </span><span style="color:#CC7832;">int</span><span> result = </span><span style="color:#9876AA;">root</span><span>.</span><span style="color:#9876AA;">item</span><span>.compareTo(key)</span><span style="color:#CC7832;">;</span></div>
<div class="ln" style="left:970px;top:495px;color:#606366;">24</div>
<div class="code" style="left:1055px;top:495px;"><span>        </span><span style="color:#CC7832;">if</span><span> (result == </span><span style="color:#6897BB;">0</span><span>) {</span></div>
<div class="ln" style="left:970px;top:515px;color:#606366;">25</div>
<div class="code" style="left:1055px;top:515px;"><span>            </span><span style="color:#CC7832;">return true;</span></div>
<div class="ln" style="left:970px;top:535px;color:#606366;">26</div>
<div class="code" style="left:1055px;top:535px;"><span>        } </span><span style="color:#CC7832;">else if</span><span> (result &lt; </span><span style="color:#6897BB;">0</span><span> &amp;&amp; node.</span><span style="color:#9876AA;">right</span><span> != </span><span style="color:#CC7832;">null</span><span>) {</span></div>
<div class="ln" style="left:970px;top:555px;color:#606366;">27</div>
<div class="code" style="left:1055px;top:555px;"><span>            </span><span style="color:#CC7832;">return</span><span> containsHelper(node.</span><span style="color:#9876AA;">right</span><span style="color:#CC7832;">,</span><span> key)</span><span style="color:#CC7832;">;</span></div>
<div class="ln" style="left:970px;top:575px;color:#606366;">28</div>
<div class="code" style="left:1055px;top:575px;"><span>        } </span><span style="color:#CC7832;">else if</span><span> (result &gt; </span><span style="color:#6897BB;">0</span><span>) {</span></div>
<div class="t" style="left:1355px;top:376px;height:20px;line-height:20px;color:#8A8A8A;font-size:13px;font-family:'Liberation Mono',monospace;font-style:italic;">key: &quot;C&quot;</div>
<div class="t" style="left:1394px;top:396px;height:20px;line-height:20px;color:#A9B5C8;font-size:13px;font-family:'Liberation Mono',monospace;font-style:italic;">key: &quot;C&quot;</div>
<svg style="position:absolute;left:1044px;top:80px;" width="11" height="14" viewBox="0 0 11 14"><path d="M0.5 0.5 L9.5 0.5 L9.5 8 L5 12.5 L0.5 8Z" fill="#2B2B2B" stroke="#6B6B6B" stroke-width="1"/><path d="M2.5 5 L7.5 5" stroke="#6B6B6B" stroke-width="1"/></svg>
<svg style="position:absolute;left:1044px;top:117px;" width="11" height="14" viewBox="0 0 11 14"><path d="M0.5 13 L9.5 13 L9.5 5.5 L5 1 L0.5 5.5Z" fill="#2B2B2B" stroke="#6B6B6B" stroke-width="1"/><path d="M2.5 8.5 L7.5 8.5" stroke="#6B6B6B" stroke-width="1"/></svg>
<svg style="position:absolute;left:1044px;top:220px;" width="11" height="14" viewBox="0 0 11 14"><path d="M0.5 0.5 L9.5 0.5 L9.5 8 L5 12.5 L0.5 8Z" fill="#2B2B2B" stroke="#6B6B6B" stroke-width="1"/><path d="M2.5 5 L7.5 5" stroke="#6B6B6B" stroke-width="1"/></svg>
<svg style="position:absolute;left:1044px;top:257px;" width="11" height="14" viewBox="0 0 11 14"><path d="M0.5 13 L9.5 13 L9.5 5.5 L5 1 L0.5 5.5Z" fill="#2B2B2B" stroke="#6B6B6B" stroke-width="1"/><path d="M2.5 8.5 L7.5 8.5" stroke="#6B6B6B" stroke-width="1"/></svg>
<svg style="position:absolute;left:1044px;top:322px;" width="11" height="11" viewBox="0 0 11 11"><rect x="0.5" y="0.5" width="9" height="9" fill="#2B2B2B" stroke="#6B6B6B" stroke-width="1"/><path d="M2.5 5 L7.5 5 M5 2.5 L5 7.5" stroke="#6B6B6B" stroke-width="1"/></svg>
<svg style="position:absolute;left:1044px;top:380px;" width="11" height="14" viewBox="0 0 11 14"><path d="M0.5 0.5 L9.5 0.5 L9.5 8 L5 12.5 L0.5 8Z" fill="#2B2B2B" stroke="#6B6B6B" stroke-width="1"/><path d="M2.5 5 L7.5 5" stroke="#6B6B6B" stroke-width="1"/></svg>
<svg style="position:absolute;left:1044px;top:417px;" width="11" height="14" viewBox="0 0 11 14"><path d="M0.5 13 L9.5 13 L9.5 5.5 L5 1 L0.5 5.5Z" fill="#2B2B2B" stroke="#6B6B6B" stroke-width="1"/><path d="M2.5 8.5 L7.5 8.5" stroke="#6B6B6B" stroke-width="1"/></svg>
<svg style="position:absolute;left:1044px;top:460px;" width="11" height="14" viewBox="0 0 11 14"><path d="M0.5 0.5 L9.5 0.5 L9.5 8 L5 12.5 L0.5 8Z" fill="#2B2B2B" stroke="#6B6B6B" stroke-width="1"/><path d="M2.5 5 L7.5 5" stroke="#6B6B6B" stroke-width="1"/></svg>
<svg style="position:absolute;left:1044px;top:500px;" width="11" height="14" viewBox="0 0 11 14"><path d="M0.5 0.5 L9.5 0.5 L9.5 8 L5 12.5 L0.5 8Z" fill="#2B2B2B" stroke="#6B6B6B" stroke-width="1"/><path d="M2.5 5 L7.5 5" stroke="#6B6B6B" stroke-width="1"/></svg>
<svg style="position:absolute;left:1044px;top:537px;" width="11" height="14" viewBox="0 0 11 14"><path d="M0.5 13 L9.5 13 L9.5 5.5 L5 1 L0.5 5.5Z" fill="#2B2B2B" stroke="#6B6B6B" stroke-width="1"/><path d="M2.5 8.5 L7.5 8.5" stroke="#6B6B6B" stroke-width="1"/></svg>
<svg style="position:absolute;left:1044px;top:577px;" width="11" height="14" viewBox="0 0 11 14"><path d="M0.5 13 L9.5 13 L9.5 5.5 L5 1 L0.5 5.5Z" fill="#2B2B2B" stroke="#6B6B6B" stroke-width="1"/><path d="M2.5 8.5 L7.5 8.5" stroke="#6B6B6B" stroke-width="1"/></svg>
<svg style="position:absolute;left:1019px;top:396px;" width="18" height="16" viewBox="0 0 18 16"><circle cx="8" cy="9" r="6.3" fill="#C75450"/><path d="M5.5 6 L8 8.5 L13 3" stroke="#E6E6E6" stroke-width="1.6" fill="none"/></svg>
<svg style="position:absolute;left:1062px;top:396px;" width="14" height="18" viewBox="0 0 14 18"><circle cx="7" cy="6" r="5" fill="#F4AF3D"/><rect x="4.5" y="9" width="5" height="2" fill="#F4AF3D"/><rect x="4" y="12" width="6" height="1" fill="#D8D8D8"/><rect x="4.5" y="14" width="5" height="1" fill="#D8D8D8"/></svg>
<svg style="position:absolute;left:1019px;top:557px;" width="16" height="16" viewBox="0 0 16 16"><circle cx="8" cy="8" r="5.5" stroke="#C8C8C8" stroke-width="1.4" fill="none"/><circle cx="8" cy="8" r="3.5" fill="#59A869"/><path d="M9 1 L13 2 L11 5" fill="#C8C8C8"/></svg>
<svg style="position:absolute;left:1823px;top:81px;" width="13" height="12" viewBox="0 0 13 12"><path d="M6.5 0.5 L12.5 11.5 L0.5 11.5Z" fill="#F0A732"/><rect x="5.8" y="4" width="1.4" height="4" fill="#2B2B2B"/><rect x="5.8" y="9" width="1.4" height="1.4" fill="#2B2B2B"/></svg>
<div class="t" style="left:1837px;top:78px;height:20px;line-height:20px;color:#BBBBBB;font-size:12.5px;">6</div>
<svg style="position:absolute;left:1853px;top:81px;" width="13" height="12" viewBox="0 0 13 12"><path d="M6.5 0.5 L12.5 11.5 L0.5 11.5Z" fill="#807C5E"/><rect x="5.8" y="4" width="1.4" height="4" fill="#2B2B2B"/><rect x="5.8" y="9" width="1.4" height="1.4" fill="#2B2B2B"/></svg>
<div class="t" style="left:1867px;top:78px;height:20px;line-height:20px;color:#BBBBBB;font-size:12.5px;">1</div>
<svg style="position:absolute;left:1881px;top:84px;" width="11" height="7" viewBox="0 0 11 7"><path d="M1 6 L5.5 1.5 L10 6" stroke="#AFB1B3" stroke-width="1.3" fill="none"/></svg>
<div style="left:1901px;top:100px;width:2px;height:10px;background:#447152;"></div>
<div style="left:1901px;top:152px;width:2px;height:34px;background:#3D6CA8;"></div>
<div style="left:1901px;top:197px;width:2px;height:5px;background:#447152;"></div>
<div style="left:1901px;top:208px;width:2px;height:20px;background:#3D6CA8;"></div>
<div style="left:1901px;top:234px;width:2px;height:131px;background:#447152;"></div>
<div style="left:21px;top:594px;width:1882px;height:1px;background:#2B2B2B;"></div>
<div style="left:21px;top:595px;width:1882px;height:26px;background:#3B4756;"></div>
<div style="left:21px;top:621px;width:1882px;height:1px;background:#323232;"></div>
<div class="t" style="left:27px;top:599px;height:20px;line-height:20px;color:#BBBBBB;font-size:13.34px;">Debug:</div>
<svg style="position:absolute;left:91px;top:601px;" width="16" height="14" viewBox="0 0 16 14"><path d="M6 1 L1 6 L6 11Z" fill="#E8622D"/><path d="M8 1 L13 6 L8 11Z" fill="#59A869"/><circle cx="13.5" cy="11.5" r="2" fill="#22DD22"/></svg>
<div class="t" style="left:110px;top:599px;height:20px;line-height:20px;color:#BBBBBB;font-size:12.86px;">BinaryTreeTest</div>
<svg style="position:absolute;left:202px;top:604px;" width="9" height="9" viewBox="0 0 9 9"><path d="M1 1 L8 8 M8 1 L1 8" stroke="#7B7E81" stroke-width="1.1"/></svg>
<div style="left:78px;top:618px;width:144px;height:3px;background:#4A88C7;"></div>
<svg style="position:absolute;left:1873px;top:600px;" width="15" height="15" viewBox="0 0 15 15"><rect x="6.00" y="-0.15" width="3.00" height="4.30" rx="0.6" fill="#AFB1B3" transform="rotate(0 7.5 7.5)"/><rect x="6.00" y="-0.15" width="3.00" height="4.30" rx="0.6" fill="#AFB1B3" transform="rotate(45 7.5 7.5)"/><rect x="6.00" y="-0.15" width="3.00" height="4.30" rx="0.6" fill="#AFB1B3" transform="rotate(90 7.5 7.5)"/><rect x="6.00" y="-0.15" width="3.00" height="4.30" rx="0.6" fill="#AFB1B3" transform="rotate(135 7.5 7.5)"/><rect x="6.00" y="-0.15" width="3.00" height="4.30" rx="0.6" fill="#AFB1B3" transform="rotate(180 7.5 7.5)"/><rect x="6.00" y="-0.15" width="3.00" height="4.30" rx="0.6" fill="#AFB1B3" transform="rotate(225 7.5 7.5)"/><rect x="6.00" y="-0.15" width="3.00" height="4.30" rx="0.6" fill="#AFB1B3" transform="rotate(270 7.5 7.5)"/><rect x="6.00" y="-0.15" width="3.00" height="4.30" rx="0.6" fill="#AFB1B3" transform="rotate(315 7.5 7.5)"/><circle cx="7.5" cy="7.5" r="4.95" fill="#AFB1B3"/><circle cx="7.5" cy="7.5" r="2.10" fill="#3B4756"/></svg>
<div style="left:1901px;top:607px;width:2px;height:2px;background:#AFB1B3;"></div>
<div style="left:1901px;top:630px;width:2px;height:4px;background:#CFCFCF;"></div>
<div style="left:1901px;top:636px;width:2px;height:4px;background:#CFCFCF;"></div>
<div style="left:21px;top:622px;width:1882px;height:28px;background:#3C3F41;"></div>
<div style="left:49px;top:621px;width:1px;height:404px;background:#323232;"></div>
<div style="left:50px;top:649px;width:1853px;height:1px;background:#323232;"></div>
<div class="t" style="left:63px;top:626px;height:20px;line-height:20px;color:#BBBBBB;font-size:11.77px;">Debugger</div>
<div style="left:50px;top:647px;width:78px;height:3px;background:#4A88C7;"></div>
<div class="t" style="left:140px;top:626px;height:20px;line-height:20px;color:#BBBBBB;font-size:11.61px;">Console</div>
<svg style="position:absolute;left:206px;top:628px;" width="18" height="17" viewBox="0 0 18 17"><path d="M2 5 L13 5 L13 12 Q13 16 7.5 16 Q2 16 2 12Z" fill="#3592C4"/><path d="M13 6.5 Q16.5 6.5 16.5 9 Q16.5 11.5 13 11.5" stroke="#3592C4" stroke-width="1.8" fill="none"/><ellipse cx="5" cy="3.2" rx="4" ry="2.6" fill="#8C8E90"/><circle cx="5" cy="3.2" r="1.1" fill="#3C3F41"/></svg>
<div class="t" style="left:227px;top:626px;height:20px;line-height:20px;color:#BBBBBB;font-size:11.57px;">Java Visualizer</div>
<svg style="position:absolute;left:320px;top:629px;" width="13" height="13" viewBox="0 0 13 13"><rect x="0" y="1" width="12" height="2" fill="#AFB1B3"/><rect x="0" y="5.5" width="12" height="2" fill="#3592C4"/><rect x="0" y="10" width="12" height="2" fill="#AFB1B3"/></svg>
<div style="left:342px;top:626px;width:1px;height:19px;background:#505356;"></div>
<svg style="position:absolute;left:351px;top:627px;" width="16" height="17" viewBox="0 0 16 17"><path d="M1.5 8 L6.5 3.5 L11 7.5" stroke="#3592C4" stroke-width="1.8" fill="none"/><path d="M13.5 5.5 L13.5 10 L9 10Z" fill="#3592C4"/><rect x="2" y="12.5" width="12" height="2" fill="#AFB1B3"/></svg>
<svg style="position:absolute;left:377px;top:627px;" width="16" height="17" viewBox="0 0 16 17"><path d="M8 1 L8 8" stroke="#3592C4" stroke-width="1.8"/><path d="M4 6 L8 10 L12 6Z" fill="#3592C4"/><rect x="2" y="12.5" width="12" height="2" fill="#AFB1B3"/></svg>
<svg style="position:absolute;left:403px;top:627px;" width="16" height="17" viewBox="0 0 16 17"><path d="M8 1 L8 8" stroke="#DB5C5C" stroke-width="1.8"/><path d="M4 6 L8 10 L12 6Z" fill="#DB5C5C"/><rect x="2" y="12.5" width="12" height="2" fill="#AFB1B3"/></svg>
<svg style="position:absolute;left:429px;top:627px;" width="16" height="17" viewBox="0 0 16 17"><path d="M8 4 L8 11" stroke="#3592C4" stroke-width="1.8"/><path d="M4 5.5 L8 1.5 L12 5.5Z" fill="#3592C4"/><rect x="2" y="12.5" width="12" height="2" fill="#AFB1B3"/></svg>
<svg style="position:absolute;left:455px;top:627px;" width="16" height="17" viewBox="0 0 16 17"><path d="M2 2 L7 7 M7 2 L2 7" stroke="#DB5C5C" stroke-width="1.8"/><path d="M6 14 L13 14 L13 7 L10 7" stroke="#AFB1B3" stroke-width="1.8" fill="none"/><path d="M6 14 L6 11.5" stroke="#AFB1B3" stroke-width="1.8"/></svg>
<svg style="position:absolute;left:481px;top:627px;" width="18" height="18" viewBox="0 0 18 18"><path d="M2.5 2.5 L8 8" stroke="#3592C4" stroke-width="1.8"/><path d="M3.5 9.5 L9.5 9.5 L9.5 3.5Z" fill="#3592C4"/><path d="M10.5 8.5 L14 8.5 M12.25 8.5 L12.25 15.5 M10.5 15.5 L14 15.5" stroke="#AFB1B3" stroke-width="1"/></svg>
<div style="left:505px;top:626px;width:1px;height:19px;background:#505356;"></div>
<svg style="position:absolute;left:515px;top:628px;" width="15" height="15" viewBox="0 0 15 15"><rect x="1.5" y="1.5" width="11" height="11.5" stroke="#AFB1B3" stroke-width="1.6" fill="none"/><rect x="3" y="3" width="8" height="1.8" fill="#AFB1B3"/><rect x="3.2" y="6.3" width="2" height="2" fill="#AFB1B3"/><rect x="6" y="6.3" width="2" height="2" fill="#AFB1B3"/><rect x="8.8" y="6.3" width="2" height="2" fill="#AFB1B3"/><rect x="3.2" y="9.3" width="2" height="2" fill="#AFB1B3"/><rect x="6" y="9.3" width="2" height="2" fill="#AFB1B3"/><rect x="8.8" y="9.3" width="2" height="2" fill="#AFB1B3"/></svg>
<svg style="position:absolute;left:541px;top:628px;" width="15" height="15" viewBox="0 0 15 15"><path d="M1 2.5 L5 2.5 M7 2.5 L13 2.5 M1 7 L6 7 M9 7 L13 7 M1 11.5 L5 11.5 M8 11.5 L13 11.5 M5 11.5 L8 2.5" stroke="#5C5F61" stroke-width="1.5" fill="none"/></svg>
<svg style="position:absolute;left:26px;top:628px;" width="18" height="18" viewBox="0 0 18 18"><path d="M13 4.5 L9 4.5 A5 5 0 1 0 9 14.5" stroke="#59A869" stroke-width="2.2" fill="none"/><path d="M12 1 L16.5 4.5 L12 8Z" fill="#59A869"/><rect x="11" y="10.5" width="5" height="4.8" fill="#AFB1B3"/></svg>
<svg style="position:absolute;left:26px;top:654px;" width="19" height="17" viewBox="0 0 19 17"><circle cx="12" cy="6.3" r="6" fill="#DB5C5C"/><rect x="10.2" y="2.2" width="1.9" height="4.3" fill="#3C3F41"/><rect x="10.2" y="7.5" width="1.9" height="1.6" fill="#3C3F41"/><path d="M1 4.5 L8.5 9 L1 13.5Z" fill="#59A869" stroke="#3C3F41" stroke-width="0.8"/></svg>
<svg style="position:absolute;left:27px;top:680px;" width="16" height="16" viewBox="0 0 16 16"><path d="M4 5 A5.5 5.5 0 0 1 12.5 4.5 M12 11 A5.5 5.5 0 0 1 3.5 11.5" stroke="#AFB1B3" stroke-width="1.4" fill="none"/><path d="M2.5 2.5 L5.5 6.5 L1.5 6.5Z M13.5 13.5 L10.5 9.5 L14.5 9.5Z" fill="#AFB1B3"/><rect x="1" y="6.5" width="3.5" height="3.5" stroke="#AFB1B3" stroke-width="1" fill="none"/><rect x="11.5" y="6.5" width="3.5" height="3.5" stroke="#AFB1B3" stroke-width="1" fill="none"/></svg>
<svg style="position:absolute;left:27px;top:706px;" width="16" height="16" viewBox="0 0 16 16"><path d="M2 14 L9 7" stroke="#AFB1B3" stroke-width="2.6" stroke-linecap="round"/><path d="M8 8 A4.5 4.5 0 0 1 12 2 L10.5 5 L12 6.5 L15 5 A4.5 4.5 0 0 1 9 9Z" fill="#AFB1B3"/></svg>
<div style="left:26px;top:730px;width:20px;height:1px;background:#505356;"></div>
<svg style="position:absolute;left:27px;top:738px;" width="16" height="16" viewBox="0 0 16 16"><rect x="2" y="2" width="3" height="12" fill="#59A869"/><path d="M7 2 L15 8 L7 14Z" fill="#59A869"/></svg>
<svg style="position:absolute;left:28px;top:765px;" width="14" height="14" viewBox="0 0 14 14"><rect x="2" y="1" width="3.5" height="12" fill="#6B6E70"/><rect x="8.5" y="1" width="3.5" height="12" fill="#6B6E70"/></svg>
<div style="left:29px;top:792px;width:13px;height:13px;background:#DB5C5C;"></div>
<div style="left:26px;top:816px;width:20px;height:1px;background:#505356;"></div>
<svg style="position:absolute;left:26px;top:823px;" width="18" height="16" viewBox="0 0 18 16"><circle cx="12" cy="5.5" r="4.8" fill="#DB5C5C"/><circle cx="6" cy="10" r="5.2" fill="#DB5C5C" stroke="#3C3F41" stroke-width="1.2"/></svg>
<svg style="position:absolute;left:27px;top:850px;" width="16" height="16" viewBox="0 0 16 16"><circle cx="8" cy="8" r="5.5" fill="#DB5C5C"/><path d="M1 15 L15 1" stroke="#AFB1B3" stroke-width="1.8"/></svg>
<div style="left:26px;top:874px;width:20px;height:1px;background:#505356;"></div>
<svg style="position:absolute;left:27px;top:883px;" width="16" height="14" viewBox="0 0 16 14"><path d="M1 3 L5 3 L6.5 1 L9.5 1 L11 3 L15 3 L15 13 L1 13Z" fill="#AFB1B3"/><circle cx="8" cy="8" r="2.8" fill="#3C3F41"/><circle cx="8" cy="8" r="1.3" fill="#AFB1B3"/></svg>
<div style="left:26px;top:907px;width:20px;height:1px;background:#505356;"></div>
<svg style="position:absolute;left:27px;top:916px;" width="15" height="15" viewBox="0 0 15 15"><rect x="6.00" y="-0.15" width="3.00" height="4.30" rx="0.6" fill="#AFB1B3" transform="rotate(0 7.5 7.5)"/><rect x="6.00" y="-0.15" width="3.00" height="4.30" rx="0.6" fill="#AFB1B3" transform="rotate(45 7.5 7.5)"/><rect x="6.00" y="-0.15" width="3.00" height="4.30" rx="0.6" fill="#AFB1B3" transform="rotate(90 7.5 7.5)"/><rect x="6.00" y="-0.15" width="3.00" height="4.30" rx="0.6" fill="#AFB1B3" transform="rotate(135 7.5 7.5)"/><rect x="6.00" y="-0.15" width="3.00" height="4.30" rx="0.6" fill="#AFB1B3" transform="rotate(180 7.5 7.5)"/><rect x="6.00" y="-0.15" width="3.00" height="4.30" rx="0.6" fill="#AFB1B3" transform="rotate(225 7.5 7.5)"/><rect x="6.00" y="-0.15" width="3.00" height="4.30" rx="0.6" fill="#AFB1B3" transform="rotate(270 7.5 7.5)"/><rect x="6.00" y="-0.15" width="3.00" height="4.30" rx="0.6" fill="#AFB1B3" transform="rotate(315 7.5 7.5)"/><circle cx="7.5" cy="7.5" r="4.95" fill="#AFB1B3"/><circle cx="7.5" cy="7.5" r="2.10" fill="#3C3F41"/></svg>
<svg style="position:absolute;left:39px;top:927px;" width="7" height="5" viewBox="0 0 7 5"><path d="M0 0 L6 0 L3 4Z" fill="#E0E0E0"/></svg>
<div style="left:26px;top:940px;width:20px;height:1px;background:#505356;"></div>
<svg style="position:absolute;left:27px;top:948px;" width="16" height="16" viewBox="0 0 16 16"><path d="M1 15 L7 9" stroke="#AFB1B3" stroke-width="1.6"/><path d="M6 6 L10 2 L14 6 L10 10Z M4 8 L8 12 L11 9 L7 5Z" fill="#AFB1B3"/></svg>
<div style="left:50px;top:650px;width:920px;height:375px;background:#3C3F41;"></div>
<div class="t" style="left:63px;top:654px;height:20px;line-height:20px;color:#BBBBBB;font-size:11.36px;">Frames</div>
<div style="left:50px;top:677px;width:920px;height:1px;background:#323232;"></div>
<div style="left:970px;top:650px;width:1px;height:375px;background:#323232;"></div>
<svg style="position:absolute;left:59px;top:684px;" width="16" height="14" viewBox="0 0 16 14"><path d="M1.5 7.5 L5.5 11.5 L13.5 2.5" stroke="#D9692B" stroke-width="2.4" fill="none"/></svg>
<div class="t" style="left:78px;top:683px;height:20px;line-height:20px;color:#BBBBBB;font-size:13.4px;">&quot;main&quot;@1 in group &quot;main&quot;: RUNNING</div>
<svg style="position:absolute;left:923px;top:685px;" width="14" height="14" viewBox="0 0 14 14"><path d="M1 1 L13 1 L8.5 6.5 L8.5 13 L5.5 11 L5.5 6.5Z" fill="#AFB1B3"/></svg>
<svg style="position:absolute;left:950px;top:690px;" width="10" height="6" viewBox="0 0 10 6"><path d="M0 0 L9 0 L4.5 5Z" fill="#AFB1B3"/></svg>
<div style="left:50px;top:707px;width:906px;height:20px;background:#0D293E;"></div>
<div class="t" style="left:66px;top:708px;height:20px;line-height:20px;color:#D4D4D4;font-size:13.44px;">contains:19, BinarySearchTree</div>
<div class="t" style="left:66px;top:728px;height:20px;line-height:20px;color:#BBBBBB;font-size:13.49px;">add:37, BinarySearchTree</div>
<div class="t" style="left:66px;top:748px;height:20px;line-height:20px;color:#BBBBBB;font-size:13.77px;">treeFormatTest:10, BinaryTreeTest</div>
<div style="left:50px;top:767px;width:906px;height:237px;background:#4C4A40;"></div>
<div class="t" style="left:66px;top:768px;height:20px;line-height:20px;color:#8F8E88;font-size:13.77px;">invokeVirtual:-1, LambdaForm$DMH/0x0000000800c18800 <i>(java.lang.invoke)</i></div>
<div class="t" style="left:66px;top:788px;height:20px;line-height:20px;color:#8F8E88;font-size:13.78px;">invoke:-1, LambdaForm$MH/0x0000000800c19400 <i>(java.lang.invoke)</i></div>
<div class="t" style="left:66px;top:808px;height:20px;line-height:20px;color:#8F8E88;font-size:13.65px;">invokeExact_MT:-1, Invokers$Holder <i>(java.lang.invoke)</i></div>
<div class="t" style="left:66px;top:828px;height:20px;line-height:20px;color:#8F8E88;font-size:13.78px;">invokeImpl:154, DirectMethodHandleAccessor <i>(jdk.internal.reflect)</i></div>
<div class="t" style="left:66px;top:848px;height:20px;line-height:20px;color:#8F8E88;font-size:13.8px;">invoke:104, DirectMethodHandleAccessor <i>(jdk.internal.reflect)</i></div>
<div class="t" style="left:66px;top:868px;height:20px;line-height:20px;color:#8F8E88;font-size:13.78px;">invoke:577, Method <i>(java.lang.reflect)</i></div>
<div class="t" style="left:66px;top:888px;height:20px;line-height:20px;color:#8F8E88;font-size:13.68px;">runReflectiveCall:59, FrameworkMethod$1 <i>(org.junit.runners.model)</i></div>
<div class="t" style="left:66px;top:908px;height:20px;line-height:20px;color:#8F8E88;font-size:13.67px;">run:12, ReflectiveCallable <i>(org.junit.internal.runners.model)</i></div>
<div class="t" style="left:66px;top:928px;height:20px;line-height:20px;color:#8F8E88;font-size:13.72px;">invokeExplosively:56, FrameworkMethod <i>(org.junit.runners.model)</i></div>
<div class="t" style="left:66px;top:948px;height:20px;line-height:20px;color:#8F8E88;font-size:13.7px;">evaluate:17, InvokeMethod <i>(org.junit.internal.runners.statements)</i></div>
<div class="t" style="left:66px;top:968px;height:20px;line-height:20px;color:#8F8E88;font-size:13.75px;">evaluate:306, ParentRunner$3 <i>(org.junit.runners)</i></div>
<div class="t" style="left:66px;top:988px;height:20px;line-height:20px;color:#8F8E88;font-size:13.56px;">evaluate:100, BlockJUnit4ClassRunner$1 <i>(org.junit.runners)</i></div>
<div style="left:959px;top:710px;width:8px;height:132px;background:#5A5D5F;border-radius:4px;"></div>
<div style="left:50px;top:1004px;width:920px;height:21px;background:#3C3F41;"></div>
<div class="t" style="left:58px;top:1005px;height:20px;line-height:20px;color:#8C8C8C;font-size:11.71px;">Switch frames from anywhere in the IDE with</div>
<svg style="position:absolute;left:295px;top:1009px;" width="21" height="10" viewBox="0 0 21 10"><path d="M0.5 1.5 L3 1.5 L6.5 8.5 L9 8.5 M6 1.5 L9 1.5" stroke="#8C8C8C" stroke-width="1.1" fill="none"/><path d="M13 3.5 L18 3.5 M13 6.5 L18 6.5 M13.5 1 L13.5 9 M17.5 1 L17.5 9" stroke="#8C8C8C" stroke-width="1"/><circle cx="12.5" cy="2" r="1.5" stroke="#8C8C8C" stroke-width="0.9" fill="none"/><circle cx="18.5" cy="2" r="1.5" stroke="#8C8C8C" stroke-width="0.9" fill="none"/><circle cx="12.5" cy="8" r="1.5" stroke="#8C8C8C" stroke-width="0.9" fill="none"/><circle cx="18.5" cy="8" r="1.5" stroke="#8C8C8C" stroke-width="0.9" fill="none"/></svg>
<svg style="position:absolute;left:316px;top:1008px;" width="8" height="11" viewBox="0 0 8 11"><path d="M4 1 L4 11 M1 4 L4 1 L7 4" stroke="#8C8C8C" stroke-width="1.1" fill="none"/></svg>
<div class="t" style="left:328px;top:1005px;height:20px;line-height:20px;color:#8C8C8C;font-size:11.39px;">and</div>
<svg style="position:absolute;left:352px;top:1009px;" width="21" height="10" viewBox="0 0 21 10"><path d="M0.5 1.5 L3 1.5 L6.5 8.5 L9 8.5 M6 1.5 L9 1.5" stroke="#8C8C8C" stroke-width="1.1" fill="none"/><path d="M13 3.5 L18 3.5 M13 6.5 L18 6.5 M13.5 1 L13.5 9 M17.5 1 L17.5 9" stroke="#8C8C8C" stroke-width="1"/><circle cx="12.5" cy="2" r="1.5" stroke="#8C8C8C" stroke-width="0.9" fill="none"/><circle cx="18.5" cy="2" r="1.5" stroke="#8C8C8C" stroke-width="0.9" fill="none"/><circle cx="12.5" cy="8" r="1.5" stroke="#8C8C8C" stroke-width="0.9" fill="none"/><circle cx="18.5" cy="8" r="1.5" stroke="#8C8C8C" stroke-width="0.9" fill="none"/></svg>
<svg style="position:absolute;left:372px;top:1008px;" width="8" height="11" viewBox="0 0 8 11"><path d="M4 0 L4 10 M1 7 L4 10 L7 7" stroke="#8C8C8C" stroke-width="1.1" fill="none"/></svg>
<svg style="position:absolute;left:953px;top:1010px;" width="9" height="9" viewBox="0 0 9 9"><path d="M1 1 L8 8 M8 1 L1 8" stroke="#7B7E81" stroke-width="1.1"/></svg>
<div style="left:971px;top:650px;width:932px;height:375px;background:#3C3F41;"></div>
<div class="t" style="left:984px;top:654px;height:20px;line-height:20px;color:#BBBBBB;font-size:12.5px;">Variables</div>
<div style="left:971px;top:677px;width:932px;height:1px;background:#323232;"></div>
<div style="left:995px;top:678px;width:1px;height:347px;background:#323232;"></div>
<div style="left:996px;top:678px;width:907px;height:28px;background:#45494A;"></div>
<div style="left:996px;top:706px;width:907px;height:1px;background:#323232;"></div>
<div class="t" style="left:1004px;top:683px;height:20px;line-height:20px;color:#727272;font-size:13px;font-family:'Liberation Mono',monospace;">Evaluate expression ( ) or add a watch (   )</div>
<svg style="position:absolute;left:1168px;top:688px;" width="10" height="10" viewBox="0 0 10 10"><path d="M8.5 1 L8.5 6 L2 6 M4 4 L2 6 L4 8" stroke="#727272" stroke-width="1.1" fill="none"/></svg>
<svg style="position:absolute;left:1316px;top:688px;" width="24" height="10" viewBox="0 0 24 10"><path d="M4 1 L7.5 5 L5.5 5 L5.5 9 L2.5 9 L2.5 5 L0.5 5Z" stroke="#727272" stroke-width="1" fill="none"/><path d="M10 3.5 L14 3.5 M10 6.5 L14 6.5 M10.5 1.5 L10.5 8.5 M13.5 1.5 L13.5 8.5" stroke="#727272" stroke-width="1"/><path d="M22.5 1 L22.5 6 L16.5 6 M18.5 4 L16.5 6 L18.5 8" stroke="#727272" stroke-width="1.1" fill="none"/></svg>
<svg style="position:absolute;left:1873px;top:684px;" width="22" height="18" viewBox="0 0 22 18"><path d="M8 1 L8 11 M3 6 L13 6" stroke="#5C5F61" stroke-width="1.6"/><circle cx="11" cy="14.5" r="2.3" stroke="#5C5F61" stroke-width="1" fill="none"/><circle cx="16" cy="14.5" r="2.3" stroke="#5C5F61" stroke-width="1" fill="none"/></svg>
<svg style="position:absolute;left:976px;top:685px;" width="13" height="13" viewBox="0 0 13 13"><path d="M6.5 1 L6.5 12 M1 6.5 L12 6.5" stroke="#C9C9C9" stroke-width="1.8"/></svg>
<div style="left:977px;top:716px;width:12px;height:2px;background:#5E6163;"></div>
<svg style="position:absolute;left:976px;top:738px;" width="13" height="8" viewBox="0 0 13 8"><path d="M0.5 7.5 L6.5 1 L12.5 7.5Z" fill="#5E6163"/></svg>
<svg style="position:absolute;left:976px;top:764px;" width="13" height="8" viewBox="0 0 13 8"><path d="M0.5 0.5 L6.5 7 L12.5 0.5Z" fill="#5E6163"/></svg>
<svg style="position:absolute;left:976px;top:787px;" width="13" height="14" viewBox="0 0 13 14"><rect x="0.8" y="0.8" width="9" height="10" stroke="#AFB1B3" stroke-width="1.6" fill="none"/><rect x="3.5" y="3.5" width="9" height="10" fill="#AFB1B3"/><path d="M5 6.5 L11 6.5 M5 9 L11 9 M5 11.5 L11 11.5" stroke="#3C3F41" stroke-width="1"/></svg>
<svg style="position:absolute;left:975px;top:815px;" width="18" height="13" viewBox="0 0 18 13"><ellipse cx="8" cy="6" rx="7" ry="4.8" fill="#AFB1B3"/><circle cx="8" cy="6" r="3" fill="#3C3F41"/><circle cx="8" cy="6" r="1.6" fill="#AFB1B3"/><path d="M12 10 L17 10 L14.5 12.5Z" fill="#E0E0E0"/></svg>
<div style="left:996px;top:727px;width:907px;height:20px;background:#2F65CA;"></div>
<svg style="position:absolute;left:1003px;top:714px;" width="10" height="7" viewBox="0 0 10 7"><path d="M1 1 L5 5.5 L9 1" stroke="#AFB1B3" stroke-width="1.3" fill="none"/></svg>
<svg style="position:absolute;left:1023px;top:710px;" width="14" height="14" viewBox="0 0 14 14"><rect x="0" y="0" width="13" height="3" fill="#D9A343"/><rect x="0" y="5" width="13" height="3" fill="#D9A343"/><rect x="0" y="10" width="13" height="3" fill="#D9A343"/></svg>
<div class="t" style="left:1039px;top:708px;height:20px;line-height:20px;font-size:13.4px;color:#BBBBBB;"><span style="color:#EE8C8C">this</span> = <span style="color:#9A9A9A">{BinarySearchTree@1113}</span></div>
<svg style="position:absolute;left:1039px;top:730px;" width="14" height="14" viewBox="0 0 14 14"><circle cx="7" cy="7" r="6.8" fill="#B58A3C"/><text x="7" y="10.8" font-size="10.5" text-anchor="middle" fill="#3A2A10" font-family="Liberation Sans">f</text></svg>
<div class="t" style="left:1057px;top:728px;height:20px;line-height:20px;color:#FFFFFF;font-size:13.69px;">root = null</div>
<svg style="position:absolute;left:1003px;top:754px;" width="10" height="7" viewBox="0 0 10 7"><path d="M1 1 L5 5.5 L9 1" stroke="#AFB1B3" stroke-width="1.3" fill="none"/></svg>
<svg style="position:absolute;left:1021px;top:750px;" width="14" height="14" viewBox="0 0 14 14"><circle cx="7" cy="7" r="6.8" fill="#B58A3C"/><text x="7" y="10.8" font-size="10.5" text-anchor="middle" fill="#3A2A10" font-family="Liberation Sans">p</text></svg>
<div class="t" style="left:1039px;top:748px;height:20px;line-height:20px;font-size:13.4px;color:#BBBBBB;"><span style="color:#EE8C8C">key</span> = <span style="color:#6A8759">"C"</span></div>
<svg style="position:absolute;left:1021px;top:772px;" width="7" height="10" viewBox="0 0 7 10"><path d="M1 1 L5.5 5 L1 9" stroke="#AFB1B3" stroke-width="1.3" fill="none"/></svg>
<svg style="position:absolute;left:1039px;top:770px;" width="14" height="14" viewBox="0 0 14 14"><circle cx="7" cy="7" r="6.8" fill="#B58A3C"/><text x="7" y="10.8" font-size="10.5" text-anchor="middle" fill="#3A2A10" font-family="Liberation Sans">f</text></svg>
<svg style="position:absolute;left:1037px;top:769px;" width="6" height="6" viewBox="0 0 6 6"><path d="M1 5 L5 1" stroke="#AFB1B3" stroke-width="1.5"/></svg>
<div class="t" style="left:1057px;top:768px;height:20px;line-height:20px;font-size:13.4px;color:#BBBBBB;"><span style="color:#EE8C8C">value</span> = <span style="color:#9A9A9A">{byte[1]@1115}</span> [67]</div>
<svg style="position:absolute;left:1039px;top:790px;" width="14" height="14" viewBox="0 0 14 14"><circle cx="7" cy="7" r="6.8" fill="#B58A3C"/><text x="7" y="10.8" font-size="10.5" text-anchor="middle" fill="#3A2A10" font-family="Liberation Sans">f</text></svg>
<svg style="position:absolute;left:1037px;top:789px;" width="6" height="6" viewBox="0 0 6 6"><path d="M1 5 L5 1" stroke="#AFB1B3" stroke-width="1.5"/></svg>
<div class="t" style="left:1057px;top:788px;height:20px;line-height:20px;font-size:13.4px;color:#BBBBBB;"><span style="color:#EE8C8C">coder</span> = 0</div>
<svg style="position:absolute;left:1040px;top:809px;" width="13" height="14" viewBox="0 0 13 14"><path d="M1.5 1 L1.5 13 M1.5 1.5 L11 1.5 L7.5 5 L11 8.5 L1.5 8.5" stroke="#AFB1B3" stroke-width="1.2" fill="none"/></svg>
<div class="t" style="left:1057px;top:808px;height:20px;line-height:20px;font-size:13.4px;color:#BBBBBB;"><span style="color:#EE8C8C">hash</span> = 67</div>
<svg style="position:absolute;left:1039px;top:830px;" width="14" height="14" viewBox="0 0 14 14"><circle cx="7" cy="7" r="6.8" fill="#B58A3C"/><text x="7" y="10.8" font-size="10.5" text-anchor="middle" fill="#3A2A10" font-family="Liberation Sans">f</text></svg>
<div class="t" style="left:1057px;top:828px;height:20px;line-height:20px;font-size:13.4px;color:#BBBBBB;"><span style="color:#EE8C8C">hashIsZero</span> = false</div>
<svg style="position:absolute;left:1020px;top:853px;" width="16" height="8" viewBox="0 0 16 8"><circle cx="4" cy="4" r="2.9" stroke="#AFB1B3" stroke-width="1.2" fill="none"/><circle cx="12" cy="4" r="2.9" stroke="#AFB1B3" stroke-width="1.2" fill="none"/><path d="M6.5 3 L9.5 3" stroke="#AFB1B3" stroke-width="1"/></svg>
<div class="t" style="left:1039px;top:848px;height:20px;line-height:20px;font-size:13.4px;color:#BBBBBB;"><span style="color:#EE8C8C">root</span> = null</div>
<div style="left:0px;top:1025px;width:1903px;height:1px;background:#323232;"></div>
<div style="left:0px;top:1026px;width:1903px;height:23px;background:#3C3F41;"></div>
<div style="left:280px;top:1026px;width:70px;height:23px;background:#2D2F30;"></div>
<div style="left:0px;top:1049px;width:1903px;height:1px;background:#323232;"></div>
<div style="left:0px;top:1050px;width:1903px;height:6px;background:#3C3F41;"></div>
<svg style="position:absolute;left:31px;top:1031px;" width="12" height="15" viewBox="0 0 12 15"><circle cx="3" cy="2.5" r="1.8" fill="#AFB1B3"/><circle cx="9.5" cy="4.5" r="1.8" fill="#AFB1B3"/><path d="M3 4 L3 14 M3 12 Q3 8 9.5 6" stroke="#AFB1B3" stroke-width="1.8" fill="none"/></svg>
<div class="t" style="left:48px;top:1028px;height:20px;line-height:20px;color:#BBBBBB;font-size:12.13px;">Git</div>
<svg style="position:absolute;left:84px;top:1033px;" width="9" height="11" viewBox="0 0 9 11"><path d="M0.5 0.5 L8.5 5.5 L0.5 10.5Z" fill="#AFB1B3"/></svg>
<div class="t" style="left:99px;top:1028px;height:20px;line-height:20px;color:#BBBBBB;font-size:11.45px;">Run</div>
<svg style="position:absolute;left:139px;top:1033px;" width="11" height="10" viewBox="0 0 11 10"><path d="M0 1 L2 1 M4 1 L11 1 M0 5 L2 5 M4 5 L11 5 M0 9 L2 9 M4 9 L11 9" stroke="#AFB1B3" stroke-width="1.6"/></svg>
<div class="t" style="left:154px;top:1028px;height:20px;line-height:20px;color:#BBBBBB;font-size:11.15px;">TODO</div>
<svg style="position:absolute;left:204px;top:1032px;" width="13" height="13" viewBox="0 0 13 13"><circle cx="6.5" cy="6.5" r="6" fill="#AFB1B3"/><rect x="5.6" y="2.8" width="1.8" height="5" fill="#3C3F41"/><rect x="5.6" y="8.8" width="1.8" height="1.8" fill="#3C3F41"/></svg>
<div class="t" style="left:221px;top:1028px;height:20px;line-height:20px;color:#BBBBBB;font-size:11.72px;">Problems</div>
<svg style="position:absolute;left:290px;top:1031px;" width="15" height="15" viewBox="0 0 15 15"><ellipse cx="6.5" cy="8" rx="4.5" ry="5" fill="#AFB1B3"/><path d="M1 4 L3.5 5.5 M12 4 L9.5 5.5 M0.5 8.5 L2.5 8.5 M12.5 8.5 L10.5 8.5 M1 13 L3.5 11.5 M12 13 L9.5 11.5" stroke="#AFB1B3" stroke-width="1.3"/><circle cx="11.5" cy="12" r="2.2" fill="#22CC22"/></svg>
<div class="t" style="left:308px;top:1028px;height:20px;line-height:20px;color:#FFFFFF;font-size:11.25px;font-weight:bold;">Debug</div>
<svg style="position:absolute;left:363px;top:1031px;" width="13" height="15" viewBox="0 0 13 15"><path d="M6.5 1 L12.5 4 L6.5 7 L0.5 4Z" stroke="#AFB1B3" stroke-width="1.2" fill="none"/><path d="M0.5 7.5 L6.5 10.5 L12.5 7.5 M0.5 11 L6.5 14 L12.5 11" stroke="#AFB1B3" stroke-width="1.3" fill="none"/></svg>
<div class="t" style="left:380px;top:1028px;height:20px;line-height:20px;color:#BBBBBB;font-size:11.63px;">Python Packages</div>
<svg style="position:absolute;left:491px;top:1032px;" width="13" height="12" viewBox="0 0 13 12"><rect x="0" y="0" width="13" height="12" fill="#AFB1B3"/><path d="M2.5 3 L5 5.5 L2.5 8 M6 9 L10 9" stroke="#3C3F41" stroke-width="1.2" fill="none"/></svg>
<div class="t" style="left:508px;top:1028px;height:20px;line-height:20px;color:#BBBBBB;font-size:11.78px;">Terminal</div>
<svg style="position:absolute;left:574px;top:1032px;" width="12" height="13" viewBox="0 0 12 13"><rect x="0.6" y="0.6" width="11" height="12" stroke="#8A8C8E" stroke-width="1.2" fill="#4A4D4F"/><path d="M4 3 L3 3 L3 10 L4 10 M8 3 L9 3 L9 10 L8 10" stroke="#AFB1B3" stroke-width="1.2" fill="none"/></svg>
<div class="t" style="left:592px;top:1028px;height:20px;line-height:20px;color:#BBBBBB;font-size:11.89px;">Style Checker</div>
<svg style="position:absolute;left:684px;top:1031px;" width="14" height="15" viewBox="0 0 14 15"><path d="M1 5 L6 1 L9 3 L7 5 L13 13 L11 15 L5 7 L3 8Z" fill="#AFB1B3"/></svg>
<div class="t" style="left:702px;top:1028px;height:20px;line-height:20px;color:#BBBBBB;font-size:12.14px;">Build</div>
<svg style="position:absolute;left:1818px;top:1031px;" width="14" height="14" viewBox="0 0 14 14"><path d="M7 0.5 A6.5 6.5 0 1 0 13.5 7 L13.5 13.5 L7 13.5" fill="#499C54"/><circle cx="7" cy="7" r="6.5" fill="#499C54"/><text x="7" y="11" font-size="10" font-weight="bold" text-anchor="middle" fill="#FFFFFF" font-family="Liberation Sans">1</text></svg>
<div class="t" style="left:1836px;top:1028px;height:20px;line-height:20px;color:#BBBBBB;font-size:11.66px;">Event Log</div></body></html>
